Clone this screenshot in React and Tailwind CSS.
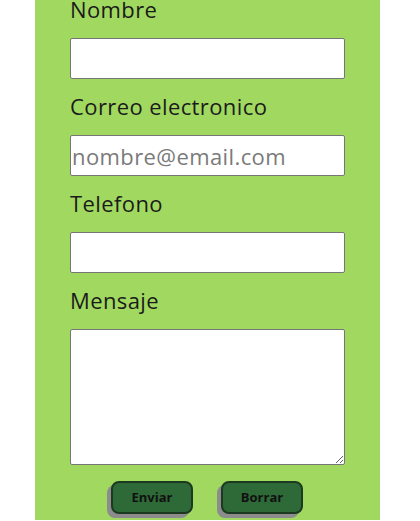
export default function App() {
  const labelCls = 'block mt-[14px] mb-[16px] text-[22px] leading-[26px] tracking-[0.4px] text-[#1b1b1b]'
  const inputCls =
    'block w-[275px] h-[41px] bg-white border border-[#767676] rounded-[2px] px-[1px] text-[22px] tracking-[0.4px] text-[#1b1b1b] placeholder:text-[#7a7a7a] outline-none'
  const btnCls =
    'w-[82px] h-[33px] rounded-[8px] bg-[#2e6a37] border-2 border-[#1c3a20] text-[13px] font-bold text-[#111] shadow-[-4px_4px_0_#8c8c8c]'

  return (
    <div className="w-[420px] h-[521px] bg-white overflow-hidden" style={{ fontFamily: '"Open Sans", Lato, sans-serif' }}>
      <div className="ml-[35px] w-[345px] h-[520px] bg-[#a1d960] overflow-hidden">
        <form className="px-[35px]">
          {/* first label sits flush with the top edge */}
          <label className="block mb-[20px] text-[22px] leading-[18px] tracking-[0.4px] text-[#1b1b1b]">Nombre</label>
          <input type="text" className={inputCls} />

          <label className={labelCls}>Correo electronico</label>
          <input type="email" placeholder="nombre@email.com" className={inputCls} />

          <label className={labelCls}>Telefono</label>
          <input type="tel" className={inputCls} />

          <label className={labelCls}>Mensaje</label>
          <textarea className="block w-[275px] h-[136px] bg-white border border-[#767676] rounded-[2px] px-[1px] outline-none" />

          <div className="flex justify-center gap-[28px] mt-[16px] -ml-[1px]">
            <button type="button" className={btnCls}>
              Enviar
            </button>
            <button type="button" className={btnCls}>
              Borrar
            </button>
          </div>
        </form>
      </div>
    </div>
  )
}
